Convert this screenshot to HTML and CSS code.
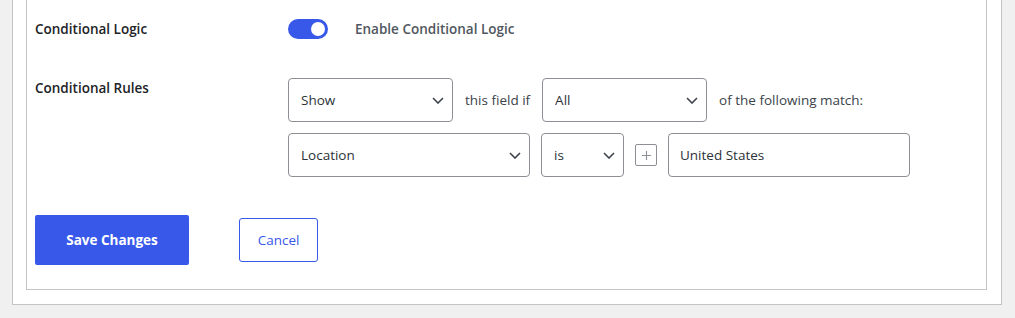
FILE: index.html
```html
<!DOCTYPE html>
<html lang="en">
  <head>
    <meta charset="UTF-8" />
    <title>Conditional Logic</title>
    <link rel="stylesheet" href="styles.css">
  </head>
  <body>
    <div class="panel">
      <div class="box">
        <div class="field-row">
          <div class="field-label">Conditional Logic</div>
          <div class="field-control toggle-wrap">
            <span class="toggle"><span class="knob"></span></span>
            <span class="toggle-text">Enable Conditional Logic</span>
          </div>
        </div>

        <div class="field-row rules-row">
          <div class="field-label">Conditional Rules</div>
          <div class="field-control rules">
            <div class="rule-line">
              <span class="select w165">
                <select><option>Show</option><option>Hide</option></select>
                <svg class="chev" viewBox="0 0 12 7"><path d="M1 1l5 5 5-5" /></svg>
              </span>
              <span class="rule-text">this field if</span>
              <span class="select w165">
                <select><option>All</option><option>Any</option></select>
                <svg class="chev" viewBox="0 0 12 7"><path d="M1 1l5 5 5-5" /></svg>
              </span>
              <span class="rule-text">of the following match:</span>
            </div>
            <div class="rule-line">
              <span class="select w242">
                <select><option>Location</option></select>
                <svg class="chev" viewBox="0 0 12 7"><path d="M1 1l5 5 5-5" /></svg>
              </span>
              <span class="select w83">
                <select><option>is</option><option>is not</option></select>
                <svg class="chev" viewBox="0 0 12 7"><path d="M1 1l5 5 5-5" /></svg>
              </span>
              <button class="add-btn" type="button">
                <svg viewBox="0 0 12 12"><path d="M6 1v10M1 6h10" /></svg>
              </button>
              <input class="text-input" type="text" value="United States" />
            </div>
          </div>
        </div>

        <div class="actions">
          <button class="btn-primary" type="button">Save Changes</button>
          <button class="btn-secondary" type="button">Cancel</button>
        </div>
      </div>
    </div>
  </body>
</html>
```

FILE: styles.css
```css
* {
  box-sizing: border-box;
  margin: 0;
  padding: 0;
}
body {
  background: #f0f0f1;
  font-family: "Open Sans", "Noto Sans", sans-serif;
  font-size: 14px;
  color: #1d2327;
  height: 318px;
  overflow: hidden;
}
.panel {
  margin-left: 12px;
  width: 990px;
  background: #fff;
  border: 1px solid #c3c4c7;
  border-top: none;
  padding: 0 14px 14px 13px;
}
.box {
  border: 1px solid #c3c4c7;
  border-top: none;
  padding: 19px 8px 24px 8px;
}
.field-row {
  display: flex;
  align-items: center;
}
.field-label {
  width: 253px;
  flex-shrink: 0;
  font-weight: 600;
  font-size: 13.5px;
  line-height: 20px;
  color: #1d2327;
}
.toggle-wrap {
  display: flex;
  align-items: center;
  gap: 27px;
}
.toggle {
  display: flex;
  justify-content: flex-end;
  align-items: center;
  width: 40px;
  height: 20px;
  border-radius: 10px;
  background: #3858e9;
  padding: 0 3px;
}
.knob {
  width: 14px;
  height: 14px;
  border-radius: 50%;
  background: #fff;
}
.toggle-text {
  font-weight: 600;
  font-size: 13.5px;
  color: #50575e;
}

.rules-row {
  align-items: flex-start;
  margin-top: 39px;
}
.rules {
  display: flex;
  flex-direction: column;
  gap: 11px;
}
.rule-line {
  display: flex;
  align-items: center;
  gap: 12px;
}
.rule-line + .rule-line {
  gap: 11px;
}
.rule-text {
  color: #3c434a;
  font-size: 13.5px;
}
.select {
  position: relative;
  display: block;
  height: 44px;
}
.w165 { width: 165px; }
.w242 { width: 242px; }
.w83 { width: 83px; }
.select select {
  appearance: none;
  -webkit-appearance: none;
  width: 100%;
  height: 100%;
  border: 1px solid #8c8f94;
  border-radius: 4px;
  background: #fff;
  padding: 0 30px 0 12px;
  font-family: inherit;
  font-size: 13.5px;
  color: #2c3338;
}
.chev {
  position: absolute;
  right: 9px;
  top: 19px;
  width: 12px;
  height: 7px;
  fill: none;
  stroke: #3c434a;
  stroke-width: 1.6;
  pointer-events: none;
}
.add-btn {
  width: 22px;
  height: 22px;
  border: 1px solid #8c8f94;
  border-radius: 2px;
  background: #fff;
  display: flex;
  align-items: center;
  justify-content: center;
}
.add-btn svg {
  width: 11px;
  height: 11px;
  fill: none;
  stroke: #8c8f94;
  stroke-width: 1.2;
}
.text-input {
  width: 242px;
  height: 44px;
  border: 1px solid #8c8f94;
  border-radius: 4px;
  padding: 0 11px;
  font-family: inherit;
  font-size: 13.5px;
  color: #2c3338;
}

.actions {
  display: flex;
  align-items: center;
  gap: 50px;
  margin-top: 38px;
}
.btn-primary {
  width: 154px;
  height: 50px;
  background: #3858e9;
  color: #fff;
  border: none;
  border-radius: 2px;
  font-family: inherit;
  font-size: 13.5px;
  font-weight: 700;
}
.btn-secondary {
  width: 79px;
  height: 44px;
  background: #fff;
  color: #3858e9;
  border: 1px solid #3858e9;
  border-radius: 3px;
  font-family: inherit;
  font-size: 13.5px;
}
```
